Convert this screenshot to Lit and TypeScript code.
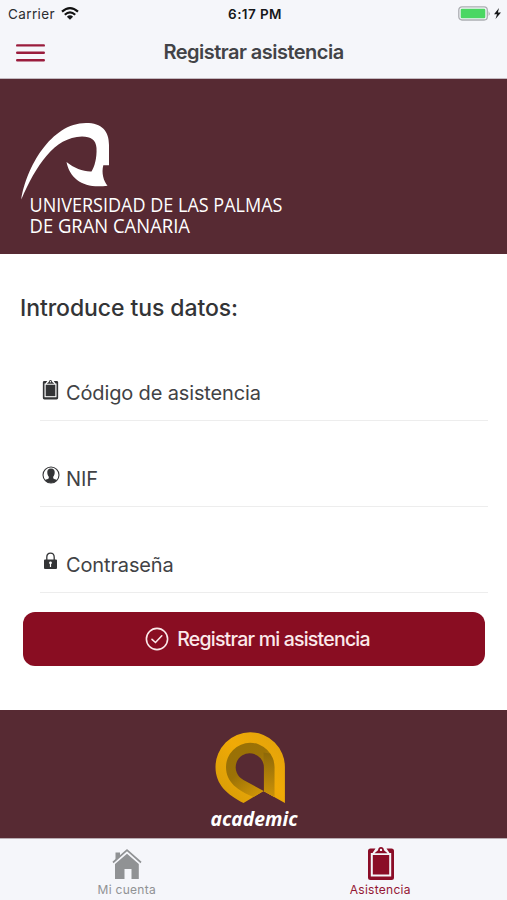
import { LitElement, html, css, svg } from "lit";
import { customElement } from "lit/decorators.js";

const clipboard = svg`
  <path fill-rule="evenodd" d="M2.500 1.500H7.500L4.500 6H2.800V29.500H23.200V6H21.500L18.500 1.500H23.500Q26 1.500 26 4V30.500Q26 33 23.500 33H2.500Q0 33 0 30.500V4Q0 1.500 2.500 1.500Z"/>
  <path d="M4.800 8H21.200V27.500H4.800Z"/>
  <path fill-rule="evenodd" d="M6.500 6.200L10 3.200Q10.500 0 13 0T16 3.200L19.500 6.200ZM13 1.700A1.200 1.200 0 1 0 13 4.100A1.200 1.200 0 1 0 13 1.700Z"/>`;

const person = svg`
  <circle cx="9" cy="9" r="8" fill="none" stroke="currentColor" stroke-width="1.100"/>
  <path d="M9 2.500C11.800 2.500 12.900 4.400 12.700 6.700C12.600 8.500 12 9.800 11.200 10.700V12.200C11.700 13.200 13.900 13 15 14.200Q12.500 17 9 17T3 14.200C4.100 13 6.300 13.200 6.800 12.200V10.700C6 9.800 5.400 8.500 5.300 6.700C5.100 4.400 6.200 2.500 9 2.500Z"/>`;

const lock = svg`
  <path d="M3.300 9V5.200Q3.300 1.200 7 1.200T10.700 5.200V9" fill="none" stroke="currentColor" stroke-width="1.300"/>
  <path fill-rule="evenodd" d="M1.500 7.500H12.500Q13.500 7.500 13.500 8.500V16Q13.500 17 12.500 17H1.500Q.5 17 .5 16V8.500Q.5 7.500 1.500 7.500ZM7 9.500A1.300 1.300 0 0 0 6.400 12V15H7.600V12A1.300 1.300 0 0 0 7 9.500Z"/>`;

@customElement("app-root")
export class AppRoot extends LitElement {
  static styles = css`
    :host { display: flex; flex-direction: column; width: 507px; height: 900px; background: #fff; font-family: Inter, "Liberation Sans", sans-serif; color: #333436; overflow: hidden; }
    * { box-sizing: border-box; }
    svg { display: block; fill: currentColor; flex: none; overflow: visible; }
    header { height: 79px; background: #f5f6fa; border-bottom: 1px solid #c3b9c0; flex: none; }
    .status { height: 27px; display: grid; grid-template-columns: 1fr auto 1fr; align-items: center; padding: 0 5px 0 8px; font-size: 13.500px; color: #17181a; line-height: 26px; }
    .carrier { display: flex; align-items: center; gap: 6px; }
    .carrier span { letter-spacing: .38px; color: #2c2d30; }
    .time { font-weight: 600; letter-spacing: .4px; }
    .power { justify-self: end; }
    .nav { height: 51px; display: grid; grid-template-columns: 1fr auto 1fr; align-items: center; padding: 0 16px; }
    .title { margin: 0; font-size: 20px; font-weight: 600; letter-spacing: -.52px; line-height: 51px; color: #424347; }
    .menu { color: #9a1c3c; }
    .banner { height: 175px; background: #572a33; padding: 41px 0 0 20px; color: #fff; flex: none; }
    .logo-text { font-family: "Open Sans", "Noto Sans", sans-serif; font-size: 19.800px; font-weight: 500; }
    main { height: 456px; padding: 0 19px 0 20px; flex: none; }
    h2 { margin: 0; padding-top: 40px; height: 81px; font-size: 23px; line-height: 28px; font-weight: 500; letter-spacing: -.08px; }
    .field { margin-left: 20px; height: 86px; border-bottom: 1px solid #ededed; display: flex; align-items: flex-end; padding-bottom: 13px; }
    .glyph { width: 26px; height: 27px; display: flex; align-items: flex-start; }
    .glyph svg { margin-left: 2px; }
    .label { font-size: 20px; line-height: 27px; letter-spacing: -.14px; color: #414245; }
    .submit { margin: 19px 3px 0 3px; width: 462px; height: 54px; border: 0; padding: 0 0 0 7px; border-radius: 12px; background: #890d22; color: #fbe9ea; display: flex; align-items: center; justify-content: center; gap: 8px; font: 500 19.500px/54px Inter, sans-serif; letter-spacing: -.78px; }
    .brand { height: 128px; background: #572a33; padding-top: 19px; display: flex; justify-content: center; color: #fff; flex: none; }
    .brand-text { font-family: "Open Sans", "Noto Sans", sans-serif; font-size: 19px; font-style: italic; font-weight: 700; }
    .tabs { flex: 1; display: grid; grid-template-columns: 1fr 1fr; background: #f5f6fa; border-top: 1px solid #b9adb3; }
    .tab { display: flex; flex-direction: column; align-items: center; font-size: 12px; color: #909294; letter-spacing: .28px; }
    .tab span { line-height: 16px; }
    .tab .pic { height: 43px; display: flex; align-items: flex-end; padding: 0 0 2px 1px; }
    .active { color: #941634; }
    .active .pic { color: #8b0d27; }
  `;

  private field(icon: unknown, label: string) {
    return html`<div class="field"><span class="glyph">${icon}</span><span class="label">${label}</span></div>`;
  }

  render() {
    return html`
      <header>
        <div class="status">
          <div class="carrier"><span>Carrier</span>
            <svg width="18" height="13" viewBox="0 0 18 13"><g fill="none" stroke="#111" stroke-width="2.200"><path d="M1 4.700Q9-2.300 17 4.700"/><path d="M3.800 7.700Q9 3 14.200 7.700"/></g><path d="M5.900 9.700Q9 7 12.100 9.700L9 12.800Z"/></svg>
          </div>
          <span class="time">6:17 PM</span>
          <svg class="power" width="44" height="15" viewBox="0 0 44 15"><rect x=".8" y=".8" width="28.500" height="13.200" rx="3.200" fill="#f5f6fa" stroke="#acaeb2" stroke-width="1.300"/><rect x="2.700" y="2.700" width="24.600" height="9.500" rx="1.200" fill="#4bd763"/><path d="M30.700 5Q32.500 7.500 30.700 10Z" fill="#999"/><path d="M41 2L36 8.200H39L37.500 13L43 6.500H39.900Z"/></svg>
        </div>
        <div class="nav">
          <svg class="menu" width="29" height="18" viewBox="0 0 29 18"><path d="M1.200 1.400H27.800M1.200 8.800H27.800M1.200 16.200H27.800" fill="none" stroke="currentColor" stroke-width="2.400" stroke-linecap="round"/></svg>
          <h1 class="title">Registrar asistencia</h1><span></span>
        </div>
      </header>
      <section class="banner">
        <svg width="270" height="120" viewBox="20 120 270 120">
          <path d="M21.300 199.500C26 168 51 123 86 123C102 123 109 131 109 145V165.300H103.300C101.300 173 103.500 181 107.500 185.700C85 189 70 180 66.500 162C74 168 84 172 91.500 171.500C94.500 167 97 158 96.500 148C96 140 91 136.500 82 136.500C54 137 36 166 21.300 199.500Z"/>
          <g class="logo-text"><text x="29.500" y="211.500" textLength="253" lengthAdjust="spacingAndGlyphs">UNIVERSIDAD DE LAS PALMAS</text><text x="29.500" y="232.500" textLength="160.500" lengthAdjust="spacingAndGlyphs">DE GRAN CANARIA</text></g>
        </svg>
      </section>
      <main>
        <h2>Introduce tus datos:</h2>
        ${this.field(html`<svg width="17" height="20" viewBox="-1 0 28 34">${clipboard}</svg>`, "Código de asistencia")}
        ${this.field(html`<svg width="18" height="18" viewBox="0 0 18 18">${person}</svg>`, "NIF")}
        ${this.field(html`<svg width="17" height="18" viewBox="-1.500 0 17 18">${lock}</svg>`, "Contraseña")}
        <button class="submit">
          <svg width="24" height="24" viewBox="0 0 24 24"><g fill="none" stroke="currentColor" stroke-width="1.600"><circle cx="12" cy="12" r="10.600"/><path d="M7 12.300L10.500 15.500L16.800 8.800" stroke-linecap="round"/></g></svg>
          <span>Registrar mi asistencia</span>
        </button>
      </main>
      <section class="brand">
        <svg width="100" height="108" viewBox="204 728.500 100 108">
          <defs>
            <linearGradient id="gold" x1="0" y1="1" x2="1" y2="0"><stop offset="0" stop-color="#d49b08"/><stop offset=".55" stop-color="#f0aa06"/><stop offset="1" stop-color="#dfa10c"/></linearGradient>
            <linearGradient id="shade" x1="0" y1="0" x2=".75" y2="1"><stop offset="0" stop-color="#987006"/><stop offset=".48" stop-color="#9c7206"/><stop offset="1" stop-color="#d69a08"/></linearGradient>
            <linearGradient id="leg" x1="0" y1="0" x2="0" y2="1"><stop offset="0" stop-color="#8d6808"/><stop offset="1" stop-color="#cc9309"/></linearGradient>
          </defs>
          <path fill="url(#gold)" d="M243.500 802.500C227 794 215.500 784 215.500 766.500A34.700 34.700 0 0 1 284.900 766.500V802.500L263.500 790.500Z"/>
          <path fill="url(#shade)" d="M253.500 796.500C238 790 226 782 226 766.500A24.200 24.200 0 0 1 274.400 766.500V796.600L263.500 790.500Z"/>
          <path fill="url(#leg)" d="M263.500 752L270 753Q274.400 759 274.400 766.500V796.600L263.500 790.500Z"/>
          <path fill="#572a33" d="M263.700 790.500L243.500 779.500A14.100 14.100 0 1 1 263.900 767V790.500Z"/>
          <text class="brand-text" x="210.500" y="825.500" textLength="87" lengthAdjust="spacingAndGlyphs">academic</text>
        </svg>
      </section>
      <nav class="tabs">
        <div class="tab"><span class="pic"><svg width="30" height="31" viewBox="0 0 30 31"><path d="M3.500 3.500H8V7L3.500 11ZM15 4.800L26.800 15V30H19.500V20H12.500V30H3V15Z"/><path d="M1 13.500L15 1.200L29 13.500" fill="none" stroke="currentColor" stroke-width="1.700"/></svg></span><span>Mi cuenta</span></div>
        <div class="tab active"><span class="pic"><svg width="26" height="33" viewBox="0 0 26 33">${clipboard}</svg></span><span>Asistencia</span></div>
      </nav>`;
  }
}
